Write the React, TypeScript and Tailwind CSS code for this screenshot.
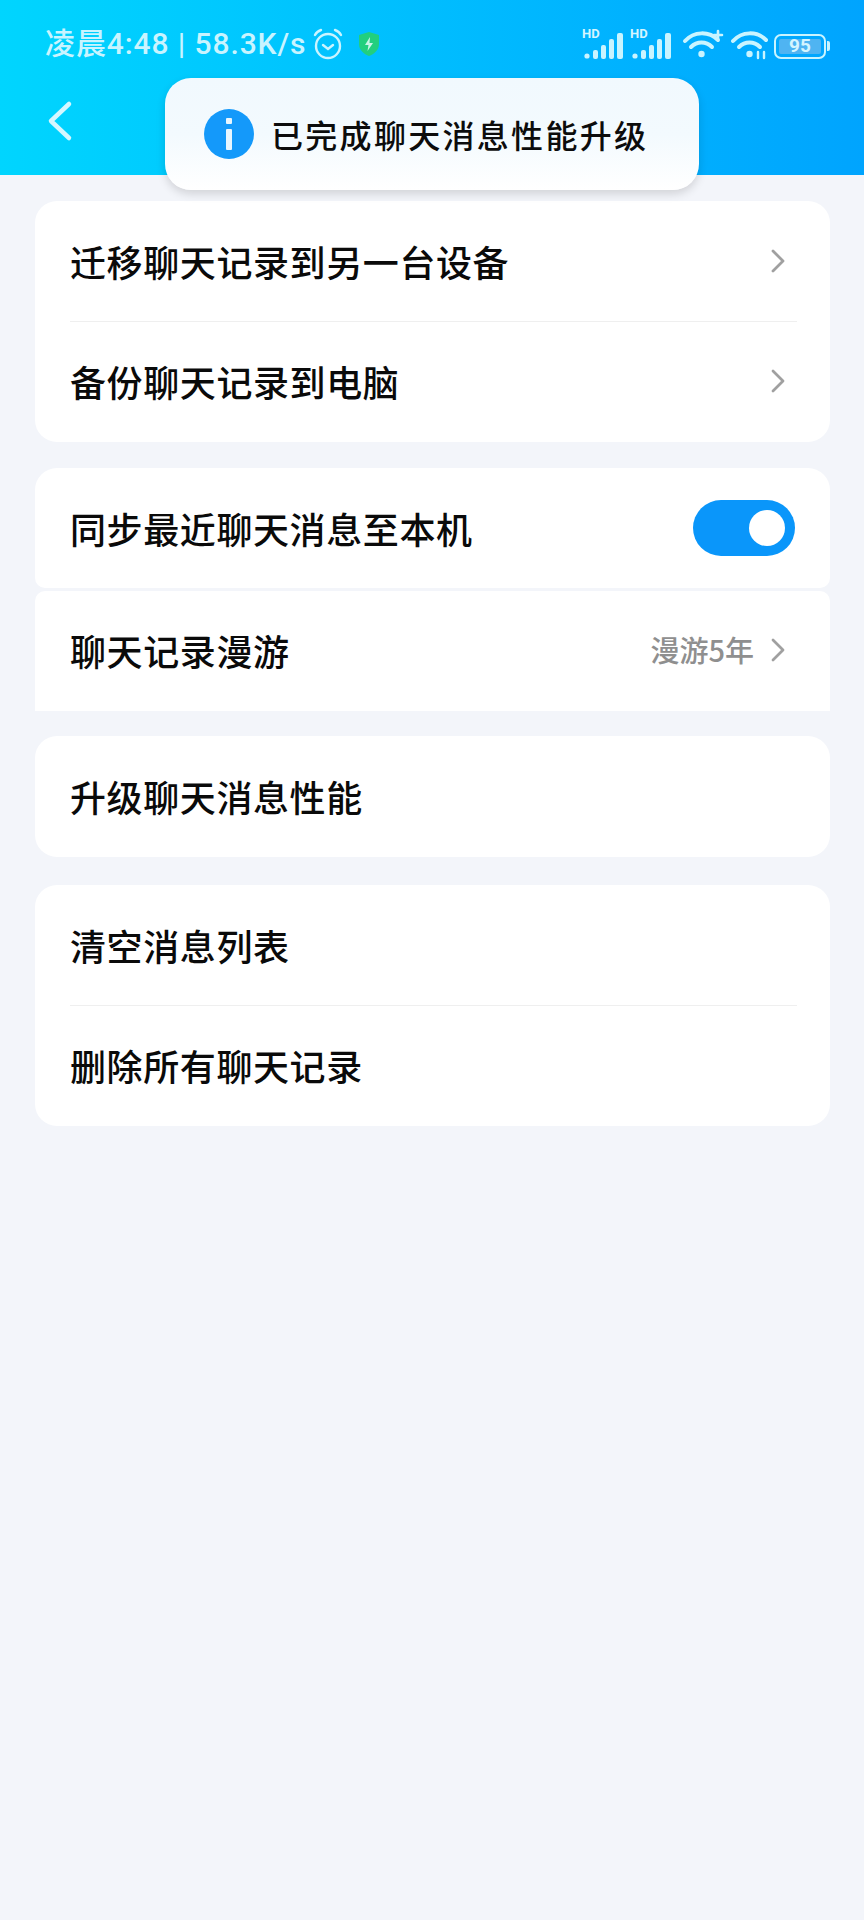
import { ReactNode } from 'react';

const tint = '#c9f4ff';

function Signal() {
  return (
    <div className="relative w-[40px] h-[30px]">
      <span className="absolute left-[-2px] top-[-4px] text-[13px] leading-[14px] font-bold text-[#d5f5ff] font-['Roboto',sans-serif]">HD</span>
      <svg width="40" height="30" viewBox="0 0 40 30" className="absolute left-0 top-0" fill={tint}>
        <circle cx="3" cy="25" r="2.6" />
        <rect x="9" y="19" width="5" height="9" rx="2" />
        <rect x="17" y="14" width="5" height="14" rx="2" />
        <rect x="25" y="8" width="5" height="20" rx="2" />
        <rect x="33" y="2" width="6" height="26" rx="2" />
      </svg>
    </div>
  );
}

function Wifi({ extra }: { extra: 'plus' | 'arrows' }) {
  return (
    <svg width="40" height="30" viewBox="0 0 40 30" fill="none" stroke={tint} strokeWidth="4" strokeLinecap="round" className="overflow-visible">
      <path d="M2 10C11 0 26 0 35 9" />
      <path d="M8 16C14 10 23 10 29 16" />
      <circle cx="18.5" cy="23" r="3.2" fill={tint} stroke="none" />
      {extra === 'plus' ? (
        <path d="M31 4h8M35 0v8" strokeWidth="2.6" />
      ) : (
        <path d="M27 27v-6M33 27v-6" strokeWidth="2.4" />
      )}
    </svg>
  );
}

function Battery() {
  return (
    <div className="flex items-center gap-[1px]">
      <div className="w-[52px] h-[25px] rounded-[7px] border-2 border-[#c9f4ff] p-[3px] flex">
        <div className="flex-1 rounded-[2px] bg-[#4fb4f2] flex items-center justify-center text-[19px] font-bold text-[#d5f5ff] font-['Roboto',sans-serif]">
          95
        </div>
      </div>
      <div className="w-[3px] h-[10px] rounded-r-[2px] bg-[#c9f4ff]" />
    </div>
  );
}

function Chevron() {
  return (
    <svg width="16" height="26" viewBox="0 0 16 26" fill="none" stroke="#a0a0a0" strokeWidth="2.8" strokeLinecap="round" strokeLinejoin="round">
      <path d="M3 3l10 10L3 23" />
    </svg>
  );
}

function Row({
  children,
  right,
  divider,
  className = 'h-[120px]',
}: {
  children: ReactNode;
  right?: ReactNode;
  divider?: boolean;
  className?: string;
}) {
  return (
    <div className={`relative flex items-center justify-between pl-[35px] pr-[44px] ${className}`}>
      <span className="text-[36px] font-medium tracking-[0.6px] text-[#0a0a0a]">{children}</span>
      {right}
      {divider && <div className="absolute left-[35px] right-[33px] bottom-0 h-px bg-[#efefef]" />}
    </div>
  );
}

function Toggle() {
  return (
    <div className="w-[102px] h-[56px] mr-[-9px] rounded-full bg-[#0a96fa] flex items-center justify-end pr-[10px]">
      <div className="w-[36px] h-[36px] rounded-full bg-white" />
    </div>
  );
}

export default function App() {
  return (
    <div className="relative w-[864px] h-[1920px] bg-[#f3f5fa] font-['Noto_Sans_CJK_SC',sans-serif] overflow-hidden">
      <div className="h-[175px] bg-gradient-to-r from-[#00d5fe] to-[#00a4fe] px-[45px]">
        <div className="h-[90px] pt-[26px] flex items-start justify-between">
          <div className="flex items-center text-[30px] leading-[36px] font-medium text-[#c9f4ff] font-['Roboto','Noto_Sans_CJK_SC',sans-serif] tracking-[0.9px]">
            <span>凌晨4:48 | 58.3K/s</span>
            <svg width="32" height="32" viewBox="0 0 32 32" fill="none" stroke={tint} strokeWidth="2.4" strokeLinecap="round" className="ml-[6px]">
              <circle cx="16" cy="18" r="12" />
              <path d="M3 7c1-2 3-4 6-5M29 7c-1-2-3-4-6-5" />
              <path d="M11 17l5 4 5-4" />
            </svg>
            <svg width="24" height="26" viewBox="0 0 24 26" className="ml-[13px]">
              <path d="M12 1l10 3v9c0 6-5 10-10 12C7 23 2 19 2 13V4z" fill="#22cf7e" />
              <path d="M13 6l-5 8h3.5L10.5 20l5.5-8h-3.5z" fill="#c9f4e8" />
            </svg>
          </div>
          <div className="flex items-center mr-[-11px] mt-[5px]">
            <Signal />
            <div className="w-[8px]" />
            <Signal />
            <div className="w-[11px]" />
            <Wifi extra="plus" />
            <div className="w-[8px]" />
            <Wifi extra="arrows" />
            <div className="w-[3px]" />
            <Battery />
          </div>
        </div>
        <svg width="26" height="42" viewBox="0 0 26 42" fill="none" stroke="#d5f7ff" strokeWidth="4.5" strokeLinecap="round" strokeLinejoin="round" className="mt-[10px] ml-[2px]">
          <path d="M22 4L4 21l18 17" />
        </svg>
      </div>

      {/* toast sits over the header */}
      <div className="absolute left-[165px] top-[78px] w-[534px] h-[112px] rounded-[26px] bg-gradient-to-b from-[#f1f9fe] via-[#f3fafe] to-white shadow-[0_4px_10px_rgba(0,0,0,0.14)] flex items-center pl-[39px]">
        <div className="w-[50px] h-[50px] rounded-full bg-[#1499fa] flex items-center justify-center shrink-0">
          <svg width="10" height="34" viewBox="0 0 10 34" fill="#e8f6ff">
            <rect x="2" y="1" width="6" height="6" rx="1" />
            <rect x="2" y="12" width="6" height="21" rx="1" />
          </svg>
        </div>
        <span className="ml-[17px] text-[32px] font-medium tracking-[2.3px] text-[#0c0c0c]">已完成聊天消息性能升级</span>
      </div>

      <div className="flex flex-col pl-[35px] pr-[34px] pt-[26px]">
        <div className="bg-white rounded-[22px]">
          <Row right={<Chevron />} divider className="h-[121px] pb-[1px]">迁移聊天记录到另一台设备</Row>
          <Row right={<Chevron />} className="h-[120px] pb-[2px]">备份聊天记录到电脑</Row>
        </div>

        <div className="mt-[26px] bg-white rounded-t-[22px] rounded-b-[10px]">
          <Row right={<Toggle />}>同步最近聊天消息至本机</Row>
        </div>
        <div className="bg-white rounded-t-[10px] mt-[3px]">
          <Row
            className="h-[120px] pb-[2px]"
            right={
              <div className="flex items-center gap-[16px]">
                <span className="text-[29px] font-medium text-[#8f8f8f]">漫游5年</span>
                <Chevron />
              </div>
            }
          >
            聊天记录漫游
          </Row>
        </div>

        <div className="mt-[25px] bg-white rounded-[22px]">
          <Row className="h-[121px] pb-[1px]">升级聊天消息性能</Row>
        </div>

        <div className="mt-[28px] bg-white rounded-[22px]">
          <Row divider className="h-[121px] pb-[1px]">清空消息列表</Row>
          <Row className="h-[120px] pb-[2px]">删除所有聊天记录</Row>
        </div>
      </div>
    </div>
  );
}
